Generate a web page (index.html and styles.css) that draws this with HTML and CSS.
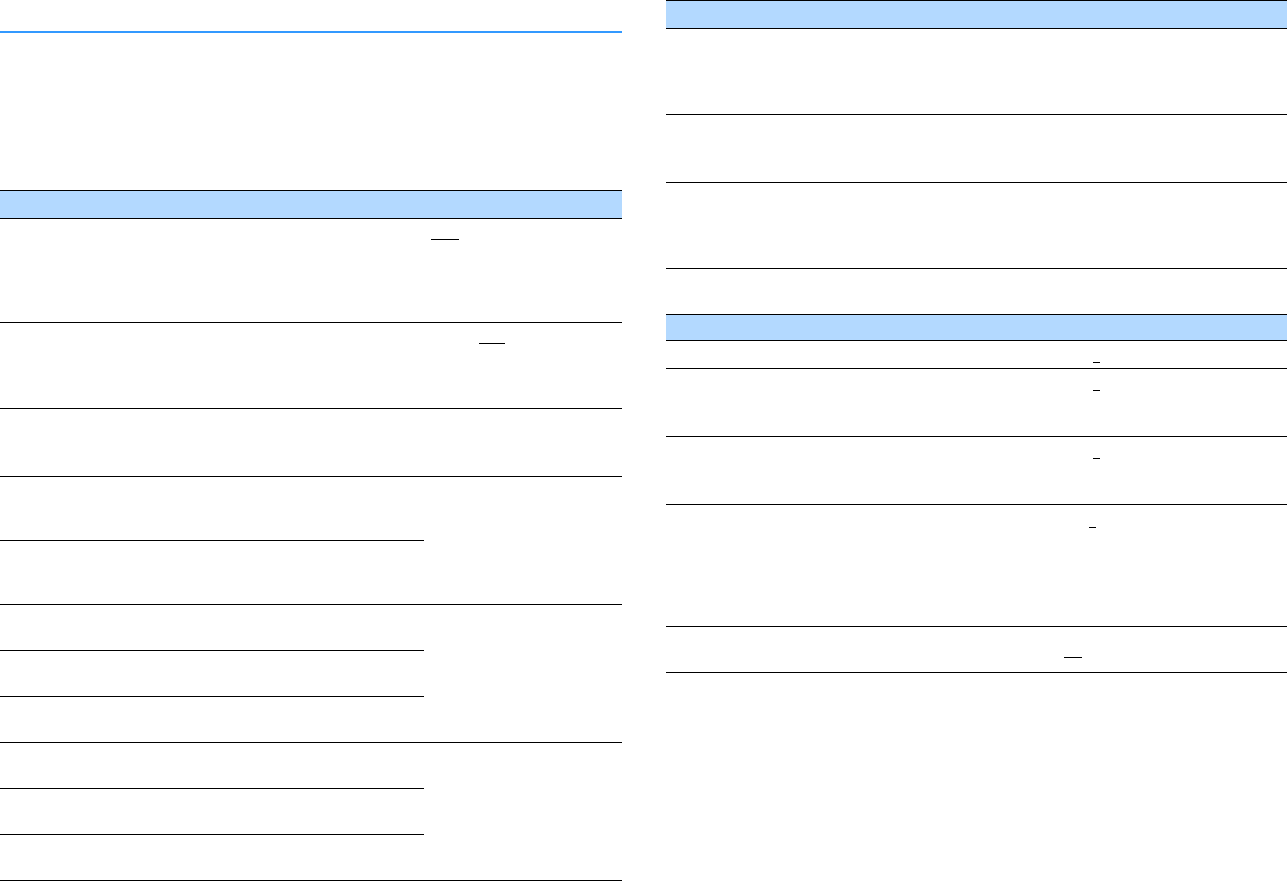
FILE: index.html
```html
<!DOCTYPE html>
<html lang="en">
<head>
<meta charset="utf-8">
<title>Tables</title>
<link rel="stylesheet" href="styles.css">
</head>
<body>
<div class="page">
  <section class="col col-left">
    <div class="rule"></div>
    <div class="tbl tbl-left">
      <div class="thead"></div>
      <div class="grid-left">
        <div class="cell r1 c1"></div>
        <div class="cell r1 c2"><span class="ul ul-l1"></span></div>
        <div class="cell r2 c1"></div>
        <div class="cell r2 c2"><span class="ul ul-l2"></span></div>
        <div class="cell r3 c1"></div>
        <div class="cell r3 c2"></div>
        <div class="cell r4 c1"></div>
        <div class="cell r4 c2 span2"></div>
        <div class="cell r5 c1"></div>
        <div class="cell r6 c1"></div>
        <div class="cell r6 c2 span3"></div>
        <div class="cell r7 c1"></div>
        <div class="cell r8 c1"></div>
        <div class="cell r9 c1"></div>
        <div class="cell r9 c2 span3"></div>
        <div class="cell r10 c1"></div>
        <div class="cell r11 c1"></div>
      </div>
    </div>
  </section>
  <section class="col col-right">
    <div class="tbl tbl-right-a">
      <div class="thead"></div>
      <div class="row h86"></div>
      <div class="row h68"></div>
      <div class="row h86"></div>
    </div>
    <div class="tbl tbl-right-b">
      <div class="thead thead-short"></div>
      <div class="row h28"><span class="ul ul-r1"></span></div>
      <div class="row h68"><span class="ul ul-r2"></span></div>
      <div class="row h68"><span class="ul ul-r3"></span></div>
      <div class="row h122"><span class="ul ul-r4"></span></div>
      <div class="row h46"><span class="ul ul-r5"></span></div>
    </div>
  </section>
</div>
</body>
</html>
```

FILE: styles.css
```css
* { box-sizing: border-box; }
html, body { margin: 0; padding: 0; background: #fff; }
body { font-family: "Liberation Sans", Arial, sans-serif; font-size: 13px; color: #000; }

.page { display: flex; width: 1287px; height: 881px; overflow: hidden; }
.col-left { width: 622px; flex: none; display: flex; flex-direction: column; }
.col-right { flex: 1; margin-left: 44px; display: flex; flex-direction: column; }

.rule { margin-top: 31px; height: 2px; background: #3399ff; }

.tbl-left { margin-top: 157px; }
.thead { height: 29px; background: #b3d9ff; border-top: 1px solid #000; border-bottom: 1px solid #000; }
.thead-short { height: 27px; }

.grid-left {
  display: grid;
  grid-template-columns: 424px 198px;
  grid-template-rows: 104px 86px 68px 64px 64px 46px 46px 46px 46px 46px 46px;
}
.cell { border-bottom: 1px solid #000; }
.c1 { grid-column: 1; }
.c2 { grid-column: 2; }
.r1 { grid-row: 1; } .r2 { grid-row: 2; } .r3 { grid-row: 3; }
.r4 { grid-row: 4; } .r5 { grid-row: 5; } .r6 { grid-row: 6; }
.r7 { grid-row: 7; } .r8 { grid-row: 8; } .r9 { grid-row: 9; }
.r10 { grid-row: 10; } .r11 { grid-row: 11; }
.r4.span2 { grid-row: 4 / span 2; }
.r6.span3 { grid-row: 6 / span 3; }
.r9.span3 { grid-row: 9 / span 3; }

.row { display: flow-root; border-bottom: 1px solid #000; }
.h28 { height: 28px; }
.h46 { height: 46px; }
.h68 { height: 68px; }
.h86 { height: 86px; }
.h122 { height: 122px; }

.tbl-right-b { margin-top: 45px; }

.ul { display: block; height: 1px; background: #000; }
.ul-l1 { margin: 20px 0 0 7px; width: 28px; }
.ul-l2 { margin: 20px 0 0 55px; width: 26px; }
.ul-r1 { margin: 21px 0 0 427px; width: 7px; }
.ul-r2 { margin: 21px 0 0 427px; width: 7px; }
.ul-r3 { margin: 21px 0 0 427px; width: 7px; }
.ul-r4 { margin: 22px 0 0 423px; width: 7px; }
.ul-r5 { margin: 30px 0 0 398px; width: 18px; }
```
